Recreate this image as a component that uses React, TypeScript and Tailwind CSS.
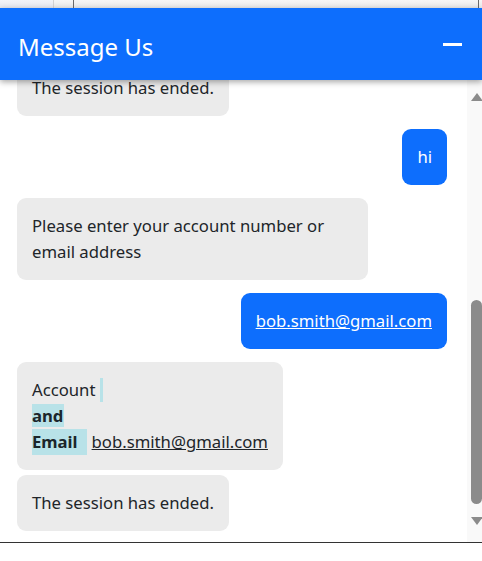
import React from "react";

const font = { fontFamily: '"Noto Sans", "Open Sans", Arial, sans-serif' };

function Gray({ children, className = "" }: { children: React.ReactNode; className?: string }) {
  return (
    <div className={"self-start rounded-[9px] bg-[#ebebeb] px-[15px] py-[15px] text-[16.7px] leading-[26px] text-[#212529] " + className}>
      {children}
    </div>
  );
}

function Blue({ children, className = "" }: { children: React.ReactNode; className?: string }) {
  return (
    <div className={"self-end rounded-[9px] bg-[#0d6efd] px-[15px] py-[15px] text-[16.7px] leading-[26px] text-white " + className}>
      {children}
    </div>
  );
}

export default function App() {
  return (
    <div className="flex h-[561px] w-[482px] flex-col overflow-hidden bg-white" style={font}>
      {/* top strip of host page */}
      <div className="flex h-[8px] shrink-0 bg-gradient-to-b from-[#f6f6f6] to-[#e9e9e9]">
        <div className="w-[53px] bg-gradient-to-b from-[#f2f3f8] to-[#e6e8ef]" />
        <div className="w-px bg-[#d2d2d2]" />
        <div className="w-[19px]" />
        <div className="w-px bg-[#6a6a6a]" />
        <div className="flex-1" />
        <div className="w-px bg-[#6a6a6a]" />
        <div className="w-[3px]" />
      </div>

      {/* header */}
      <div className="relative z-10 flex h-[72px] shrink-0 items-center justify-between bg-[#0d6efd] pl-[18px] pr-[20px] shadow-[0_2px_6px_rgba(0,0,0,0.35)]">
        <span className="pt-[6px] text-[24px] leading-none text-white">Message Us</span>
        <span className="block h-[3px] w-[19px] bg-white" />
      </div>

      {/* chat area */}
      <div className="flex h-[462px] shrink-0 overflow-hidden">
        <div className="flex-1 overflow-hidden pl-[17px] pr-[20px]">
          <div className="mt-[-20px] flex flex-col">
            <Gray>The session has ended.</Gray>
            <Blue className="mt-[13px]">hi</Blue>
            <Gray className="mt-[13px] w-[351px]">Please enter your account number or email address</Gray>
            <Blue className="mt-[13px]">
              <span className="underline">bob.smith@gmail.com</span>
            </Blue>
            <Gray className="mt-[13px] w-[266px]">
              <div className="flex items-center">
                <span>Account</span>
                <span className="ml-[5px] inline-block h-[24px] w-[3px] bg-[#b8e2e8]" />
              </div>
              <div>
                <span className="bg-[#b8e2e8] pr-[1px] font-bold text-[#1b262b]">and</span>
              </div>
              <div className="flex">
                <span className="bg-[#b8e2e8] pr-[9px] font-bold text-[#1b262b]">Email</span>
                <span className="ml-[5px] underline">bob.smith@gmail.com</span>
              </div>
            </Gray>
            <Gray className="mt-[5px]">The session has ended.</Gray>
          </div>
        </div>
        {/* scrollbar */}
        <div className="flex w-[15px] shrink-0 flex-col items-center bg-[#f9f9f9] pl-[4px]">
          <svg width="12" height="8" viewBox="0 0 12 8" className="mt-[13px]">
            <polygon points="6,0 12,8 0,8" fill="#8b8b8b" />
          </svg>
          <div className="mt-[199px] h-[204px] w-[11px] rounded-full bg-[#8b8b8b]" />
          <svg width="12" height="8" viewBox="0 0 12 8" className="mt-[13px]">
            <polygon points="0,0 12,0 6,8" fill="#8b8b8b" />
          </svg>
        </div>
      </div>
      <div className="h-px shrink-0 bg-[#333333]" />
      <div className="flex-1 bg-white" />
    </div>
  );
}
